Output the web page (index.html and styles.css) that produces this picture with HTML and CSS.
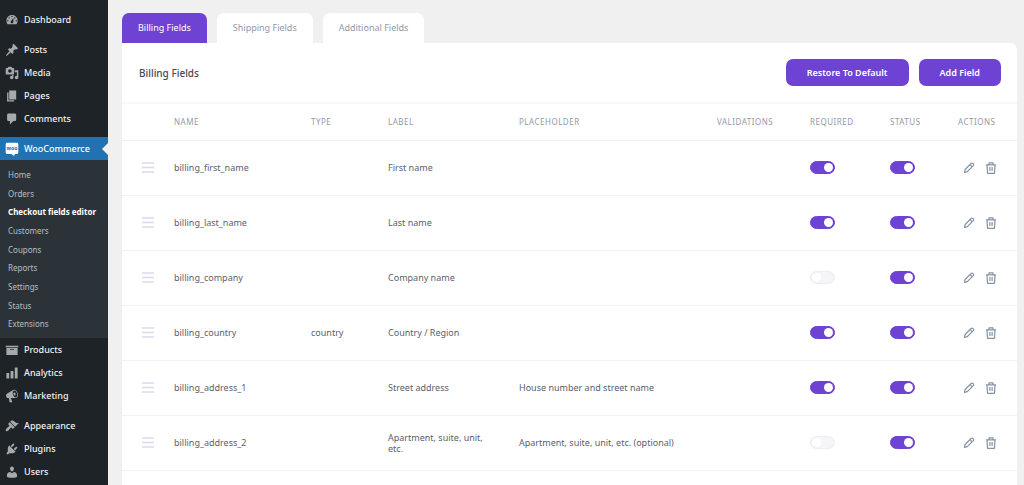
FILE: index.html
```html
<!DOCTYPE html>
<html lang="en">
<head>
<meta charset="utf-8">
<title>Checkout fields editor</title>
<link rel="stylesheet" href="styles.css">
</head>
<body>
<nav class="sidebar" aria-label="Main menu">
  <ul class="menu">
    <li><a class="menu-link" href="#"><svg class="icon" viewBox="0 0 20 20"><path d="M3.76 16h12.48c1.1-1.37 1.76-3.11 1.76-5 0-4.42-3.58-8-8-8s-8 3.58-8 8c0 1.89.66 3.63 1.76 5zM10 4c.55 0 1 .45 1 1s-.45 1-1 1-1-.45-1-1 .45-1 1-1zM6 6c.55 0 1 .45 1 1s-.45 1-1 1-1-.45-1-1 .45-1 1-1zm8 0c.55 0 1 .45 1 1s-.45 1-1 1-1-.45-1-1 .45-1 1-1zm-5.37 5.55L12 7v6c0 1.1-.9 2-2 2s-2-.9-2-2c0-.57.24-1.08.63-1.45zM4 10c.55 0 1 .45 1 1s-.45 1-1 1-1-.45-1-1 .45-1 1-1zm12 0c.55 0 1 .45 1 1s-.45 1-1 1-1-.45-1-1 .45-1 1-1z"/></svg>Dashboard</a></li>
    <li class="group"><a class="menu-link" href="#"><svg class="icon" viewBox="0 0 20 20"><path d="M10.44 3.02l1.82-1.82 6.36 6.35-1.83 1.82c-1.05-.68-2.48-.57-3.41.36l-.75.75c-.92.93-1.04 2.35-.35 3.41l-1.83 1.82-2.41-2.41-2.8 2.79c-.42.42-3.38 2.71-3.8 2.29s1.86-3.39 2.28-3.81l2.79-2.79L4.1 9.36l1.83-1.82c1.05.69 2.48.57 3.4-.36l.75-.75c.93-.92 1.05-2.35.36-3.41z"/></svg>Posts</a></li>
    <li><a class="menu-link" href="#"><svg class="icon" viewBox="0 0 20 20"><path d="M13 11V4c0-.55-.45-1-1-1h-1.67L9 1H5L3.67 3H2c-.55 0-1 .45-1 1v7c0 .55.45 1 1 1h10c.55 0 1-.45 1-1zM7 4.5c1.38 0 2.5 1.12 2.5 2.5S8.38 9.5 7 9.5 4.5 8.38 4.5 7 5.62 4.5 7 4.5zM14 6h5v10.5c0 1.38-1.12 2.5-2.5 2.5S14 17.88 14 16.5s1.12-2.5 2.5-2.5c.17 0 .34.02.5.05V9h-3V6zm-4 8.05V13h2v3.5c0 1.38-1.12 2.5-2.5 2.5S7 17.88 7 16.5 8.12 14 9.5 14c.17 0 .34.02.5.05z"/></svg>Media</a></li>
    <li><a class="menu-link" href="#"><svg class="icon" viewBox="0 0 20 20"><path d="M6 15V2h10v13H6zm-1 1h8v2H3V5h2v11z"/></svg>Pages</a></li>
    <li><a class="menu-link" href="#"><svg class="icon" viewBox="0 0 20 20"><path d="M5 2h9c1.1 0 2 .9 2 2v7c0 1.1-.9 2-2 2h-2l-5 5v-5H5c-1.1 0-2-.9-2-2V4c0-1.1.9-2 2-2z"/></svg>Comments</a></li>
    <li class="group"><a class="menu-link current" href="#"><svg class="icon woo" viewBox="0 0 20 20"><path fill="#fff" d="M3 1h14q2 0 2 2v12q0 2-2 2h-3l-1 3-4-3H3q-2 0-2-2V3q0-2 2-2z"/><text x="10" y="11.5" text-anchor="middle" font-size="7.5" font-weight="700" fill="#2271b1">woo</text></svg>WooCommerce</a>
      <ul class="submenu">
        <li><a href="#">Home</a></li>
        <li><a href="#">Orders</a></li>
        <li><a class="active" href="#">Checkout fields editor</a></li>
        <li><a href="#">Customers</a></li>
        <li><a href="#">Coupons</a></li>
        <li><a href="#">Reports</a></li>
        <li><a href="#">Settings</a></li>
        <li><a href="#">Status</a></li>
        <li><a href="#">Extensions</a></li>
      </ul>
    </li>
    <li><a class="menu-link" href="#"><svg class="icon" viewBox="0 0 20 20"><path d="M19 4v2H1V4h18zM2 7h16v10H2V7zm11 3V9H7v1h6z"/></svg>Products</a></li>
    <li><a class="menu-link" href="#"><svg class="icon" viewBox="0 0 20 20"><path d="M18 18V2h-4v16h4zm-6 0V7H8v11h4zm-6 0v-8H2v8h4z"/></svg>Analytics</a></li>
    <li><a class="menu-link" href="#"><svg class="icon" viewBox="0 0 20 20"><path d="M18.15 5.94c.46 1.62.38 3.22-.02 4.48-.42 1.28-1.26 2.18-2.3 2.48-.16.06-.26.06-.4.06-.06.02-.12.02-.18.02-.06.02-.14.02-.22.02h-6.8l2.22 5.5c.02.14-.06.26-.14.34-.08.1-.24.16-.34.16H6.95c-.1 0-.26-.06-.34-.16-.08-.08-.16-.2-.14-.34l-1-5.5H4.25l-.02-.02c-.5.06-1.08-.18-1.54-.62s-.88-1.08-1.06-1.88c-.24-.8-.2-1.56-.02-2.2.18-.62.58-1.08 1.06-1.3l.02-.02 9-5.4c.1-.06.18-.1.24-.16.06-.04.14-.08.24-.12.16-.08.28-.12.5-.18 1.04-.3 2.24.1 3.22.98s1.84 2.24 2.26 3.86zm-2.58 5.98h-.02c.4-.1.74-.34 1.04-.7.58-.7.86-1.76.86-3.04 0-.64-.1-1.3-.28-1.98-.34-1.36-1.02-2.5-1.78-3.24s-1.68-1.1-2.46-.88c-.82.22-1.4.96-1.7 2-.32 1.04-.28 2.36.06 3.72.38 1.36 1 2.5 1.8 3.24.78.74 1.62 1.1 2.48.88zm-2.54-7.08c.22-.04.42-.02.62.04.38.16.76.48 1.02 1s.42 1.2.42 1.78c0 .3-.04.56-.12.8-.18.48-.44.84-.86.94-.34.1-.8-.06-1.14-.4s-.64-.86-.78-1.5c-.18-.62-.12-1.24.02-1.72s.48-.84.82-.94z"/></svg>Marketing</a></li>
    <li class="group"><a class="menu-link" href="#"><svg class="icon" viewBox="0 0 20 20"><path d="M14.48 11.06L7.41 3.99l1.5-1.5c.5-.56 2.3-.47 3.51.32 1.21.8 1.43 1.28 2.91 2.1 1.18.64 2.45 1.26 4.45.85zm-.71.71L6.7 4.7 4.93 6.47c-.39.39-.39 1.02 0 1.41l1.06 1.06c.39.39.39 1.03 0 1.42-.6.6-1.43 1.11-2.21 1.69-.35.26-.7.53-1.01.84C1.43 14.23.4 16.08 1.4 17.07c.99 1 2.84-.03 4.18-1.36.31-.31.58-.66.85-1.02.57-.78 1.08-1.61 1.69-2.21.39-.39 1.02-.39 1.41 0l1.06 1.06c.39.39 1.02.39 1.41 0z"/></svg>Appearance</a></li>
    <li><a class="menu-link" href="#"><svg class="icon" viewBox="0 0 20 20"><path d="M13.11 4.36L9.87 7.6 8 5.73l3.24-3.24c.35-.34 1.05-.2 1.56.32.52.51.66 1.21.31 1.55zm-8 1.77l.91-1.12 9.01 9.01-1.19.84c-.71.71-2.63 1.16-3.82 1.16H6.14L4.9 17.26c-.59.59-1.54.59-2.12 0-.59-.58-.59-1.53 0-2.12l1.24-1.24v-3.88c0-1.13.4-3.19 1.09-3.89zm7.26 3.97l3.24-3.24c.34-.35 1.04-.21 1.55.31.52.51.66 1.21.31 1.55l-3.24 3.25z"/></svg>Plugins</a></li>
    <li><a class="menu-link" href="#"><svg class="icon" viewBox="0 0 20 20"><path d="M10 9.25c-2.27 0-2.73-3.44-2.73-3.44C7 4.02 7.82 2 9.97 2c2.16 0 2.98 2.02 2.71 3.81 0 0-.41 3.44-2.68 3.44zm0 2.57L12.72 10c2.39 0 4.52 2.33 4.52 4.53v2.49s-3.65 1.13-7.24 1.13c-3.65 0-7.24-1.13-7.24-1.13v-2.49c0-2.25 1.94-4.48 4.47-4.48z"/></svg>Users</a></li>
  </ul>
</nav>
<main class="content">
  <div class="tabs">
    <button class="tab selected" type="button">Billing Fields</button>
    <button class="tab" type="button">Shipping Fields</button>
    <button class="tab" type="button">Additional Fields</button>
  </div>
  <section class="panel">
    <header class="panel-head">
      <h1>Billing Fields</h1>
      <button class="primary" type="button">Restore To Default</button>
      <button class="primary" type="button">Add Field</button>
    </header>
    <table class="fields">
      <colgroup><col class="c-handle"><col class="c-name"><col class="c-type"><col class="c-label"><col><col class="c-valid"><col class="c-req"><col class="c-status"><col class="c-actions"></colgroup>
      <thead>
        <tr><th></th><th>NAME</th><th>TYPE</th><th>LABEL</th><th>PLACEHOLDER</th><th>VALIDATIONS</th><th>REQUIRED</th><th>STATUS</th><th>ACTIONS</th></tr>
      </thead>
      <tbody id="rows"></tbody>
    </table>
  </section>
</main>
<script src="fields.js"></script>
</body>
</html>
```

FILE: styles.css
```css
* { box-sizing: border-box; }

body {
  margin: 0;
  height: 100vh;
  display: flex;
  overflow: hidden;
  background: #f0f0f0;
  color: #5a5f6e;
  font: 9px/12px "Noto Sans", "Open Sans", sans-serif;
}

button { font: inherit; border: 0; cursor: pointer; }

/* Sidebar */
.sidebar {
  flex: 0 0 108px;
  padding-top: 8px;
  background: #1d2327;
}

.menu, .submenu { list-style: none; margin: 0; padding: 0; }
.group { margin-top: 7px; }

.menu-link {
  position: relative;
  display: flex;
  align-items: center;
  gap: 5px;
  height: 23px;
  padding-left: 5px;
  color: #f0f0f1;
  font-weight: 500;
  text-decoration: none;
}

.icon { flex: none; width: 14px; height: 14px; fill: #a7aaad; }

.current { background: #2271b1; color: #fff; }

.current::after {
  content: "";
  position: absolute;
  right: 0;
  top: 6px;
  border: 6px solid transparent;
  border-left-width: 0;
  border-right-color: #f0f0f0;
}

.submenu {
  display: grid;
  grid-auto-rows: 1fr;
  min-height: 178px;
  padding: 6px 0 4px;
  background: #2c3338;
}

.submenu a {
  display: block;
  padding: 3px 0 3px 8px;
  color: #b9bdc2;
  font-size: 8px;
  text-decoration: none;
  white-space: nowrap;
}

.submenu .active { color: #fff; font-weight: 700; }

/* Content */
.content {
  flex: 1;
  min-width: 0;
  display: flex;
  flex-direction: column;
  padding: 13px 7px 0 14px;
}

.tabs { display: flex; gap: 10px; }

.tab {
  height: 30px;
  padding: 0 16px;
  border-radius: 7px 7px 0 0;
  background: #fff;
  color: #9299a8;
}

.tab.selected { background: #6e42d3; color: #fff; }

.panel {
  flex: 1;
  background: #fff;
  border-radius: 0 7px 0 0;
}

.panel-head {
  display: flex;
  align-items: center;
  gap: 10px;
  height: 61px;
  padding: 0 16px 0 17px;
  border-bottom: 2px solid #f8f8fa;
}

.panel-head h1 {
  flex: 1;
  margin: 0;
  color: #434956;
  font-size: 10px;
  line-height: 14px;
  font-weight: 500;
}

.primary {
  height: 27px;
  padding: 0 21px;
  border-radius: 7px;
  background: #6e42d3;
  color: #fff;
  font-weight: 600;
}

.fields {
  width: 100%;
  table-layout: fixed;
  border-collapse: collapse;
}

.c-handle { width: 52px; }
.c-name { width: 137px; }
.c-type { width: 77px; }
.c-label { width: 131px; }
.c-valid { width: 93px; }
.c-req { width: 80px; }
.c-status { width: 68px; }
.c-actions { width: 59px; }

.fields th {
  height: 36px;
  padding: 0;
  border-bottom: 1px solid #eeeef5;
  color: #9299a8;
  font-size: 8px;
  font-weight: 400;
  letter-spacing: 0.5px;
  text-align: left;
}

.fields td {
  height: 55px;
  padding: 0;
  border-bottom: 1px solid #f1f1f7;
  line-height: 11px;
}

.fields td:nth-child(4) { padding-right: 30px; }

.handle {
  display: block;
  width: 12px;
  height: 11px;
  margin-left: 20px;
  fill: #d9dbec;
}

.toggle {
  appearance: none;
  display: block;
  width: 25px;
  height: 13px;
  margin: 0;
  padding: 2px;
  border: 1px solid #ededf1;
  border-radius: 7px;
  background: #f5f5f8;
}

.toggle::before {
  content: "";
  display: block;
  width: 9px;
  height: 9px;
  margin: -1px;
  border-radius: 50%;
  background: #fff;
}

.toggle:checked { border-color: #6e42d3; background: #6e42d3; }
.toggle:checked::before { margin-left: 11px; }

.actions { display: flex; gap: 10px; padding-left: 5px; }

.actions button {
  width: 12px;
  height: 12px;
  padding: 0;
  background: none;
}

.actions svg {
  display: block;
  width: 12px;
  height: 12px;
  fill: none;
  stroke: #8593a3;
  stroke-width: 1.2;
  stroke-linejoin: round;
}
```

FILE: fields.js
```js
const fields = [
  { name: "billing_first_name", label: "First name", required: true },
  { name: "billing_last_name", label: "Last name", required: true },
  { name: "billing_company", label: "Company name", required: false },
  { name: "billing_country", type: "country", label: "Country / Region", required: true },
  { name: "billing_address_1", label: "Street address", placeholder: "House number and street name", required: true },
  { name: "billing_address_2", label: "Apartment, suite, unit, etc.", placeholder: "Apartment, suite, unit, etc. (optional)", required: false },
];

const toggle = (label, on) =>
  `<input class="toggle" type="checkbox" role="switch" aria-label="${label}"${on ? " checked" : ""}>`;

document.getElementById("rows").innerHTML = fields.map((f) => `
  <tr>
    <td><svg class="handle" viewBox="0 0 12 11"><path d="M0 .2h12v1.5H0zM0 4.7h12v1.5H0zM0 9.2h12v1.5H0z"/></svg></td>
    <td>${f.name}</td>
    <td>${f.type || ""}</td>
    <td>${f.label}</td>
    <td>${f.placeholder || ""}</td>
    <td></td>
    <td>${toggle("Required: " + f.name, f.required)}</td>
    <td>${toggle("Status: " + f.name, true)}</td>
    <td><div class="actions">
      <button type="button" aria-label="Edit ${f.name}"><svg viewBox="0 0 12 12"><path d="M1.5 10.5l.6-3 6-6q1-.8 2 .1t.2 2l-6 6zM7 2.7l2.2 2.2"/></svg></button>
      <button type="button" aria-label="Delete ${f.name}"><svg viewBox="0 0 12 12"><path d="M1 2.8h10M4 2.8V.8h4v2M2 2.8l.5 8.5h7l.5-8.5M4.9 5v4M7.1 5v4"/></svg></button>
    </div></td>
  </tr>`).join("");
```
